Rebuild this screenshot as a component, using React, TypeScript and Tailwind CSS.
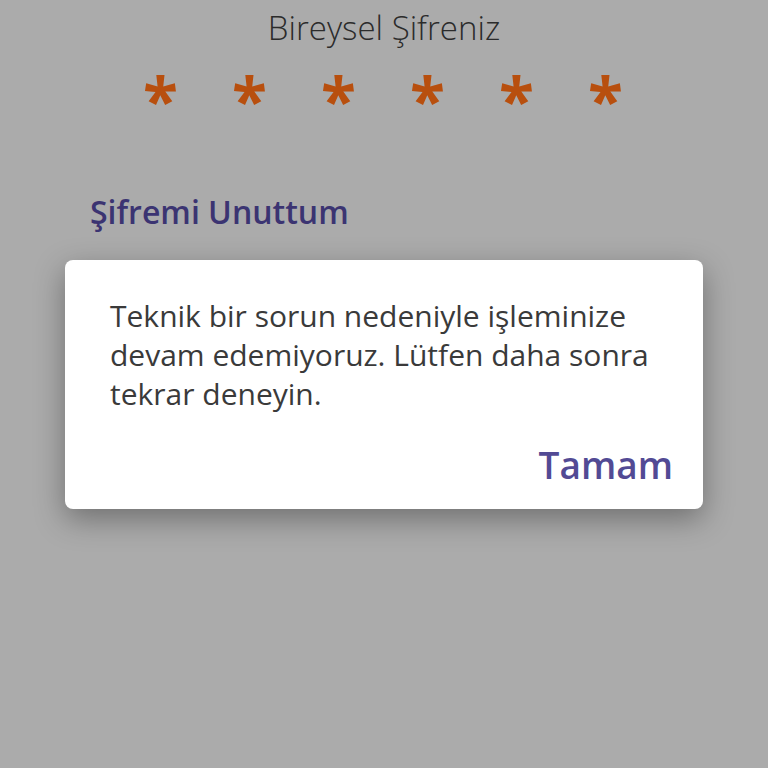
import React from "react";

export default function App() {
  const font = { fontFamily: '"Open Sans", "Noto Sans", sans-serif' };
  return (
    <div className="w-full h-[768px] bg-[#ababab] overflow-hidden flex flex-col" style={font}>
      <div className="pt-[6px] text-center text-[33px] leading-[44px] font-light text-[#2b2b2b]">Bireysel Şifreniz</div>
      <div className="mt-[20px] flex justify-center gap-[56px] pr-[4px] text-[#b84f0e] text-[64px] leading-[60px] font-bold">
        {[0, 1, 2, 3, 4, 5].map((i) => (
          <span key={i} className="w-[33px] text-center">*</span>
        ))}
      </div>
      <div className="mt-[62px] pl-[90px] text-[32px] leading-[40px] font-semibold text-[#3b3472]">Şifremi Unuttum</div>
      <div className="mt-[28px] mx-[65px] bg-white rounded-[8px] shadow-[0_10px_30px_rgba(0,0,0,0.35)] pl-[45px] pr-[36px] pt-[36px] pb-[22px]">
        <p className="text-[30px] leading-[39px] text-[#3a3a3a]">
          Teknik bir sorun nedeniyle işleminize devam edemiyoruz. Lütfen daha sonra tekrar deneyin.
        </p>
        <div className="mt-[30px] flex justify-end mr-[-6px]">
          <span className="text-[37px] leading-[44px] font-semibold text-[#524a94]">Tamam</span>
        </div>
      </div>
    </div>
  );
}
